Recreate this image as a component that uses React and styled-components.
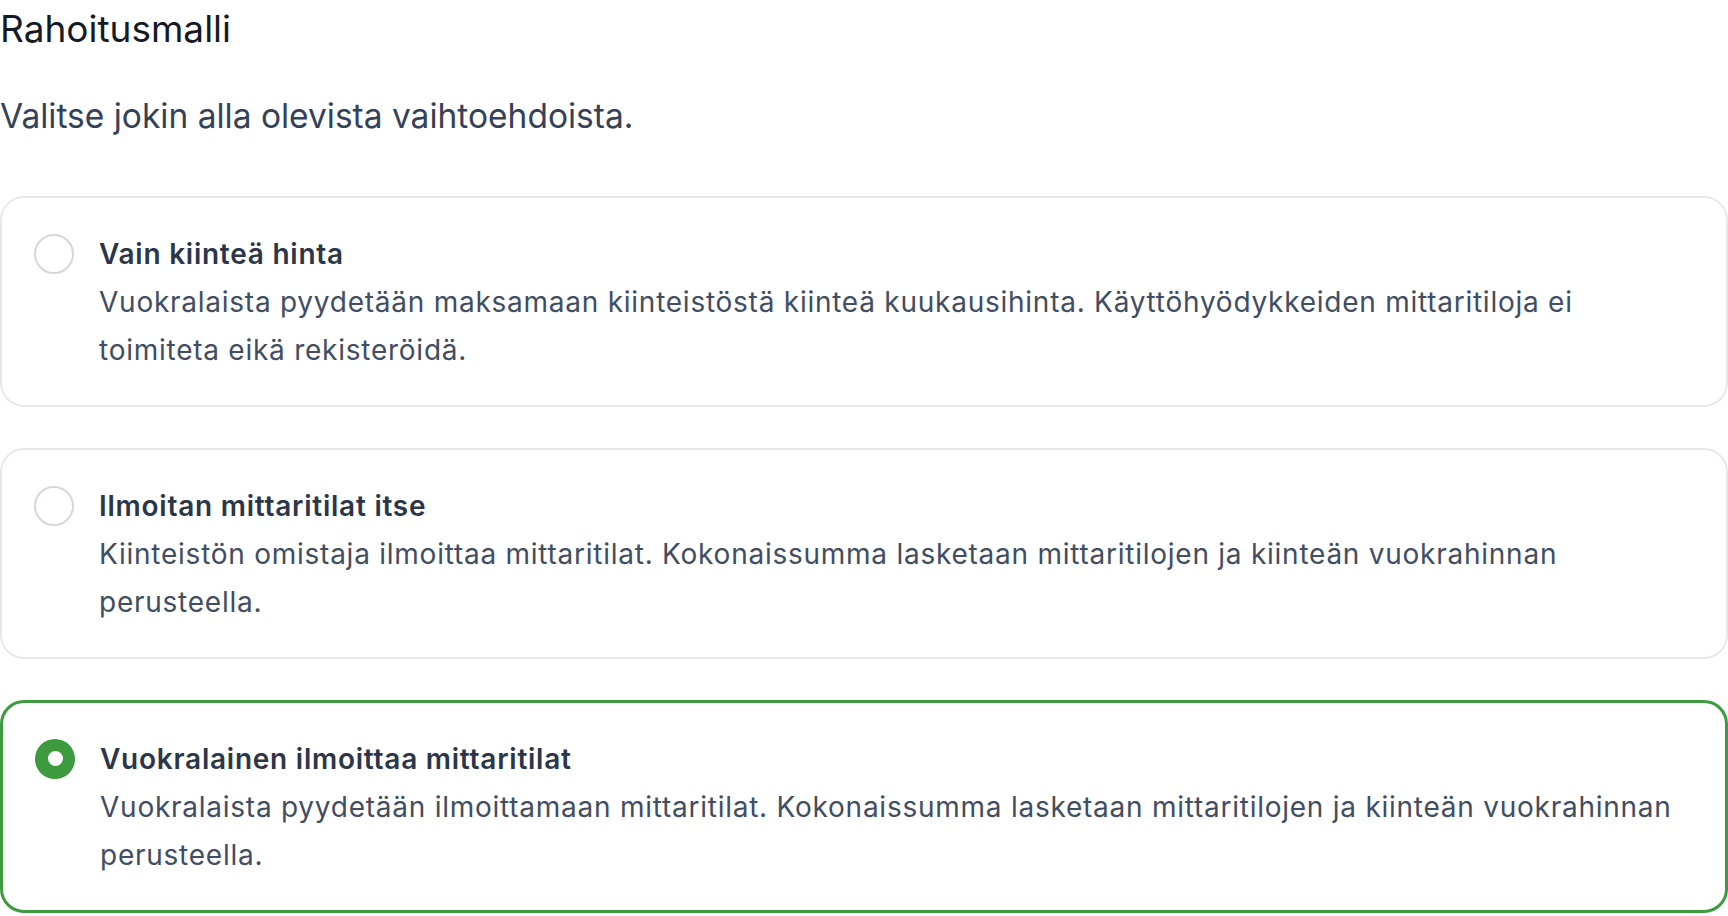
import React, { useState } from "react";
import styled, { createGlobalStyle } from "styled-components";

const GlobalStyle = createGlobalStyle`
  *, *::before, *::after { box-sizing: border-box; }
  html, body { margin: 0; padding: 0; background: #ffffff; }
  body {
    font-family: "Inter", "Liberation Sans", sans-serif;
    -webkit-font-smoothing: antialiased;
  }
`;

const Page = styled.main`
  display: flex;
  flex-direction: column;
  width: 1728px;
`;

const Heading = styled.h1`
  margin: 0;
  font-size: 37px;
  line-height: 57px;
  font-weight: 400;
  color: #141a27;
`;

const Intro = styled.p`
  margin: 35px 0 0;
  font-size: 33.5px;
  line-height: 48px;
  font-weight: 400;
  color: #354157;
`;

const OptionList = styled.div`
  display: flex;
  flex-direction: column;
  gap: 41px;
  margin-top: 56px;
`;

const OptionCard = styled.div`
  display: flex;
  align-items: flex-start;
  gap: 25px;
  padding: 31.5px 32px;
  background: #ffffff;
  border: ${(p) => (p.$selected ? "3px solid #3d9a3f" : "2px solid #e7e8ec")};
  border-radius: 24px;
  cursor: pointer;
`;

const Radio = styled.span`
  flex: 0 0 40px;
  width: 40px;
  height: 40px;
  margin-top: 4px;
  border-radius: 50%;
  display: flex;
  align-items: center;
  justify-content: center;
  background: ${(p) => (p.$selected ? "#3d9a3f" : "#ffffff")};
  border: ${(p) => (p.$selected ? "none" : "2px solid #d5d7dc")};

  &::after {
    content: "";
    display: ${(p) => (p.$selected ? "block" : "none")};
    width: 15px;
    height: 15px;
    border-radius: 50%;
    background: #ffffff;
  }
`;

const OptionBody = styled.div`
  flex: 1;
  min-width: 0;
  display: flex;
  flex-direction: column;
`;

const OptionTitle = styled.div`
  font-size: 28px;
  line-height: 48px;
  font-weight: 600;
  letter-spacing: 0.75px;
  color: #2c3649;
`;

const OptionText = styled.div`
  font-size: 28px;
  line-height: 48px;
  font-weight: 400;
  letter-spacing: 0.75px;
  color: #414d62;
`;

const options = [
  {
    id: "fixed",
    title: "Vain kiinteä hinta",
    text: "Vuokralaista pyydetään maksamaan kiinteistöstä kiinteä kuukausihinta. Käyttöhyödykkeiden mittaritiloja ei toimiteta eikä rekisteröidä.",
  },
  {
    id: "owner",
    title: "Ilmoitan mittaritilat itse",
    text: "Kiinteistön omistaja ilmoittaa mittaritilat. Kokonaissumma lasketaan mittaritilojen ja kiinteän vuokrahinnan perusteella.",
  },
  {
    id: "tenant",
    title: "Vuokralainen ilmoittaa mittaritilat",
    text: "Vuokralaista pyydetään ilmoittamaan mittaritilat. Kokonaissumma lasketaan mittaritilojen ja kiinteän vuokrahinnan perusteella.",
  },
];

export default function App() {
  const [selected, setSelected] = useState("tenant");
  return (
    <>
      <GlobalStyle />
      <Page>
        <Heading>Rahoitusmalli</Heading>
        <Intro>Valitse jokin alla olevista vaihtoehdoista.</Intro>
        <OptionList role="radiogroup" aria-label="Rahoitusmalli">
          {options.map((o) => {
            const isSel = selected === o.id;
            return (
              <OptionCard
                key={o.id}
                role="radio"
                aria-checked={isSel}
                $selected={isSel}
                onClick={() => setSelected(o.id)}
              >
                <Radio $selected={isSel} />
                <OptionBody>
                  <OptionTitle>{o.title}</OptionTitle>
                  <OptionText>{o.text}</OptionText>
                </OptionBody>
              </OptionCard>
            );
          })}
        </OptionList>
      </Page>
    </>
  );
}
